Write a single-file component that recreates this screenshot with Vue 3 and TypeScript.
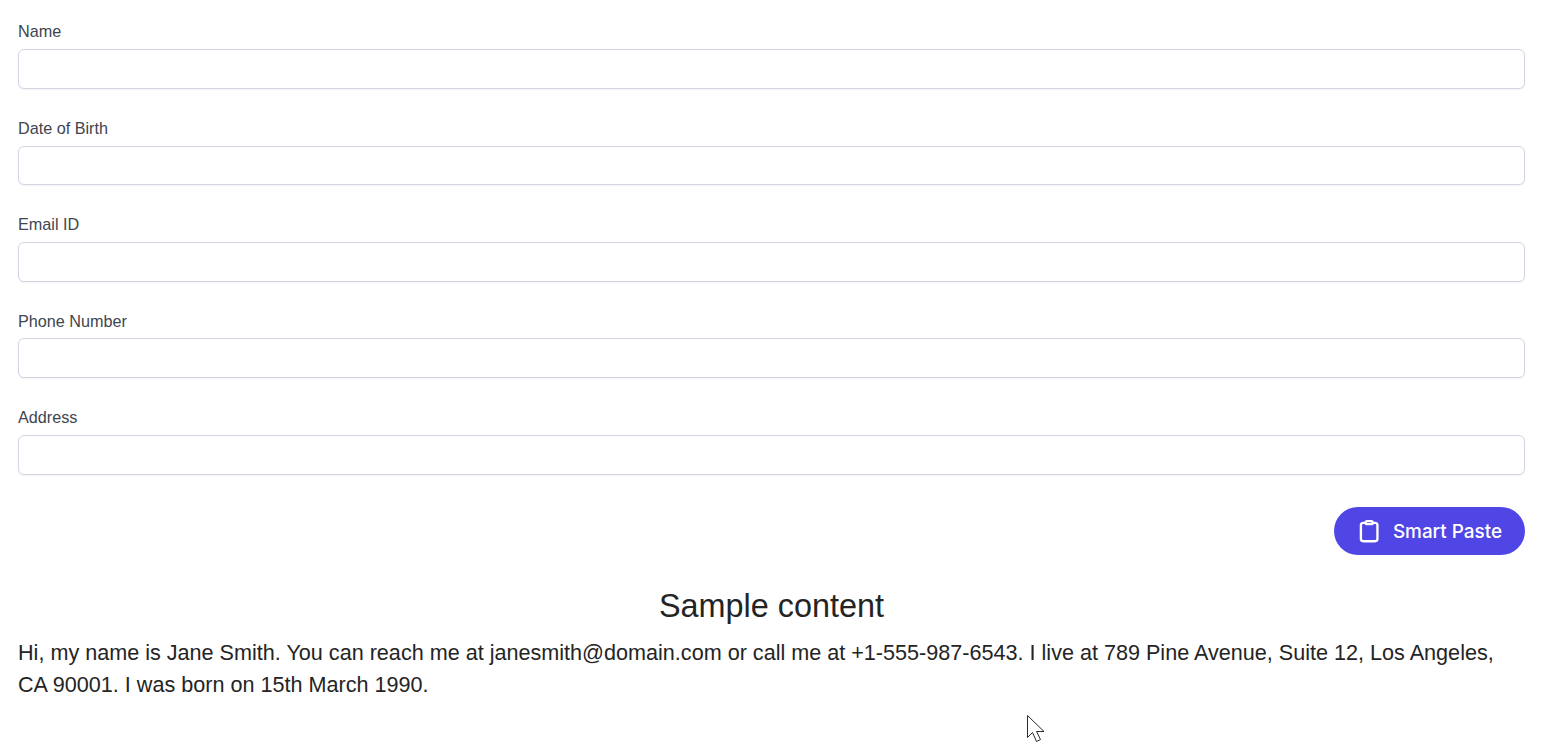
<script setup lang="ts">
const fields: string[] = ['Name', 'Date of Birth', 'Email ID', 'Phone Number', 'Address']
</script>

<template>
  <main class="page">
    <form class="form" @submit.prevent>
      <div v-for="f in fields" :key="f" class="field">
        <label class="label">{{ f }}</label>
        <input class="input" type="text" />
      </div>
      <div class="actions">
        <button class="paste" type="button">
          <svg class="icon" viewBox="0 0 24 24" fill="none" stroke="currentColor" stroke-width="2" stroke-linecap="round" stroke-linejoin="round" aria-hidden="true">
            <path d="M9 5H7a2 2 0 0 0-2 2v11.500a2 2 0 0 0 2 2h10a2 2 0 0 0 2-2V7a2 2 0 0 0-2-2h-2" />
            <rect x="9" y="3.500" width="6" height="2.500" rx="1.200" />
          </svg>
          <span>Smart Paste</span>
        </button>
      </div>
    </form>
    <section class="sample">
      <h2 class="title">Sample content</h2>
      <p class="text">Hi, my name is Jane Smith. You can reach me at janesmith@domain.com or call me at +1-555-987-6543. I live at 789 Pine Avenue, Suite 12, Los Angeles, CA 90001. I was born on 15th March 1990.</p>
    </section>
    <svg class="cursor" width="20" height="30" viewBox="0 0 20 30" aria-hidden="true">
      <path d="M1.500 1.500V23.500L6.500 18.500L10.500 27.500L14.500 25.500L10.500 17.500H18Z" fill="#fff" stroke="#2a2a2a" stroke-width="1" stroke-linejoin="miter" />
    </svg>
  </main>
</template>

<style scoped>
.page {
  position: relative;
  box-sizing: border-box;
  height: 751px;
  padding: 21.4px 18px 0;
  overflow: hidden;
  background: #fff;
  color: #242424;
  font-family: "Liberation Sans", Arial, sans-serif;
}
.form {
  display: flex;
  flex-direction: column;
  gap: 28.8px;
}
.field {
  display: flex;
  flex-direction: column;
  gap: 7.8px;
}
.label {
  font-size: 16.2px;
  line-height: 20px;
  color: #404550;
}
.input {
  box-sizing: border-box;
  height: 39.8px;
  width: 100%;
  border: 1px solid #d3d5e2;
  border-radius: 6px;
  background: #fff;
  box-shadow: 0 1px 2px rgba(0, 0, 0, 0.05);
  outline: none;
}
.actions {
  display: flex;
  justify-content: flex-end;
  margin-top: 3.6px;
}
.paste {
  display: flex;
  align-items: center;
  gap: 10px;
  height: 48px;
  padding: 1px 23px 0 21px;
  border: 0;
  border-radius: 24px;
  background: #4f46e5;
  color: #fff;
  font-family: Inter, sans-serif;
  font-size: 18.9px;
  font-weight: 500;
}
.icon {
  width: 28.35px;
  height: 28.35px;
  flex: none;
}
.sample {
  margin-top: 32px;
}
.title {
  margin: 0 0 11.800px;
  text-align: center;
  font-size: 32.4px;
  font-weight: 400;
  line-height: 38px;
}
.text {
  margin: 0;
  font-size: 21.6px;
  line-height: 32px;
}
.cursor {
  position: absolute;
  left: 1026px;
  top: 714px;
}
</style>
